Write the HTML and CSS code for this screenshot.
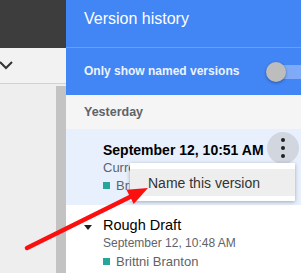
FILE: index.html
```html
<!DOCTYPE html>
<html>
<head>
<meta charset="utf-8">
<link rel="stylesheet" href="styles.css">
</head>
<body>
<div class="page">
  <div class="left">
    <div class="topbar"></div>
    <div class="toolbar">
      <svg class="chev" width="14" height="10" viewBox="0 0 14 10"><path d="M1 2 L7 8 L13 2" fill="none" stroke="#333" stroke-width="2"/></svg>
    </div>
    <div class="docarea">
      <div class="scroll"></div>
    </div>
  </div>
  <div class="panel">
    <div class="header">Version history</div>
    <div class="filter">
      <span class="filter-label">Only show named versions</span>
      <span class="toggle"><span class="track"></span><span class="thumb"></span></span>
    </div>
    <div class="group">Yesterday</div>
    <div class="item selected">
      <div class="marker"></div>
      <div class="lines">
        <div class="title bold">September 12, 10:51 AM</div>
        <div class="sub">Current version</div>
        <div class="author"><span class="sq"></span>Brittni Branton</div>
      </div>
      <div class="more"><span></span><span></span><span></span></div>
      <div class="menu"><div class="menu-item">Name this version</div></div>
    </div>
    <div class="item">
      <div class="marker"><span class="tri"></span></div>
      <div class="lines">
        <div class="title named">Rough Draft</div>
        <div class="sub">September 12, 10:48 AM</div>
        <div class="author"><span class="sq"></span>Brittni Branton</div>
      </div>
    </div>
  </div>
  <svg class="arrow" width="301" height="273" viewBox="0 0 301 273">
    <line x1="27" y1="248" x2="133" y2="195.5" stroke="#fb1010" stroke-width="4.5" stroke-linecap="round"/>
    <polygon points="148,188 126.5,189.7 133.7,204.1" fill="#fb1010"/>
  </svg>
</div>
</body>
</html>
```
FILE: styles.css
```css
* { box-sizing: border-box; }
html, body { margin: 0; padding: 0; }
body {
  width: 301px;
  height: 273px;
  overflow: hidden;
  font-family: "Liberation Sans", Arial, sans-serif;
  background: #fff;
}
.page {
  position: relative;
  display: grid;
  grid-template-columns: 66px 235px;
  height: 273px;
  overflow: hidden;
}
.left {
  display: flex;
  flex-direction: column;
  background: #eeeeee;
}
.topbar {
  height: 48px;
  background: #3d3d3d;
}
.toolbar {
  height: 36px;
  background: #f2f2f2;
  border-bottom: 1px solid #d2d2d2;
  display: flex;
  align-items: center;
}
.chev { margin-left: -1px; margin-top: -2px; }
.docarea {
  flex: 1;
  display: flex;
  justify-content: flex-end;
  padding-top: 2px;
}
.scroll {
  width: 10px;
  background: #c3c3c3;
}
.panel {
  display: flex;
  flex-direction: column;
  overflow: hidden;
}
.header {
  height: 48px;
  background: #4285f4;
  color: #fff;
  font-size: 16px;
  padding: 10px 0 0 18px;
  border-bottom: 1px solid #6a9ef6;
}
.filter {
  height: 47px;
  background: #4285f4;
  display: flex;
  align-items: center;
  padding-left: 18px;
  position: relative;
}
.filter-label {
  color: #eef3fe;
  font-weight: bold;
  font-size: 12px;
  margin-top: -1px;
}
.toggle {
  position: absolute;
  left: 200px;
  top: 14px;
  width: 40px;
  height: 20px;
}
.track {
  position: absolute;
  left: 10px;
  top: 3px;
  width: 36px;
  height: 14px;
  border-radius: 7px;
  background: #7eaaf7;
}
.thumb {
  position: absolute;
  left: 0;
  top: 0;
  width: 20px;
  height: 20px;
  border-radius: 50%;
  background: #bdbdbd;
  box-shadow: 0 1px 3px rgba(0,0,0,0.35);
}
.group {
  height: 34px;
  background: #f5f5f5;
  color: #5f6368;
  font-weight: bold;
  font-size: 12.5px;
  padding-left: 18px;
  display: flex;
  align-items: center;
}
.item {
  position: relative;
  display: grid;
  grid-template-columns: 19px 1fr;
  padding-left: 18px;
}
.item.selected {
  background: #e8f0fe;
  height: 76px;
  padding-top: 12px;
}
.item:not(.selected) {
  padding-top: 11px;
}
.marker { position: relative; }
.tri {
  position: absolute;
  left: 0;
  top: 9px;
  width: 0;
  height: 0;
  border-left: 4px solid transparent;
  border-right: 4px solid transparent;
  border-top: 5px solid #202124;
}
.title {
  color: #000;
  line-height: 18px;
}
.title.bold { font-weight: bold; font-size: 14px; }
.title.named { font-size: 14.5px; line-height: 18px; }
.sub {
  color: #5f6368;
  font-size: 12px;
  line-height: 19px;
}
.item.selected .sub { font-size: 13px; line-height: 18px; }
.author {
  color: #5f6368;
  font-size: 13px;
  line-height: 17px;
  display: flex;
  align-items: center;
}
.sq {
  width: 7px;
  height: 7px;
  background: #26a69a;
  margin-right: 6px;
}
.more {
  position: absolute;
  right: 2px;
  top: 3px;
  width: 32px;
  height: 32px;
  border-radius: 50%;
  background: #d2d7df;
  display: flex;
  flex-direction: column;
  align-items: center;
  justify-content: center;
  gap: 4px;
}
.more span {
  width: 4px;
  height: 4px;
  border-radius: 50%;
  background: #202124;
}
.menu {
  position: absolute;
  left: 64px;
  top: 34px;
  width: 165px;
  height: 38px;
  background: #fff;
  padding-top: 6px;
  box-shadow: 0 1px 4px rgba(0,0,0,0.3);
}
.menu-item {
  height: 27px;
  background: #eeeeee;
  padding-left: 18px;
  font-size: 14px;
  color: #333;
  display: flex;
  align-items: center;
}
.arrow {
  position: absolute;
  left: 0;
  top: 0;
  pointer-events: none;
}
```
